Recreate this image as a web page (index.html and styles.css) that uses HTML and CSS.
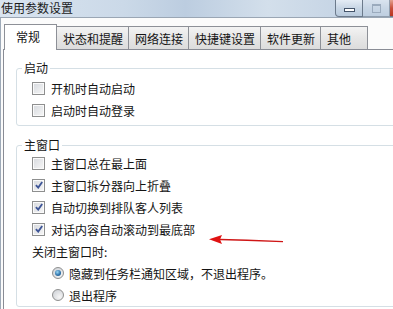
FILE: index.html
```html
<!DOCTYPE html>
<html lang="zh-CN">
<head>
    <meta charset="UTF-8">
    <meta name="viewport" content="width=device-width, initial-scale=1.0">
    <title>使用参数设置</title>
    <link rel="stylesheet" href="styles.css">
</head>
<body>
    <div class="window">
        <div class="titlebar">
            <span class="title">使用参数设置</span>
            <div class="controls">
                <span class="btn min"><i></i></span>
                <span class="btn max"><i></i></span>
                <span class="btn close"></span>
            </div>
        </div>
        <div class="client">
            <div class="tabs">
                <span class="tab active">常规</span>
                <span class="tab">状态和提醒</span>
                <span class="tab">网络连接</span>
                <span class="tab">快捷键设置</span>
                <span class="tab">软件更新</span>
                <span class="tab last">其他</span>
            </div>
            <div class="panel">
                <fieldset class="group">
                    <legend>启动</legend>
                    <label class="option"><span class="check"></span>开机时自动启动</label>
                    <label class="option"><span class="check"></span>启动时自动登录</label>
                </fieldset>
                <fieldset class="group second">
                    <legend>主窗口</legend>
                    <label class="option"><span class="check"></span>主窗口总在最上面</label>
                    <label class="option"><span class="check on"><svg viewBox="0 0 7 7"><path d="M0.8 3.6 L2.8 5.8 L6.3 0.8"/></svg></span>主窗口拆分器向上折叠</label>
                    <label class="option"><span class="check on"><svg viewBox="0 0 7 7"><path d="M0.8 3.6 L2.8 5.8 L6.3 0.8"/></svg></span>自动切换到排队客人列表</label>
                    <label class="option"><span class="check on"><svg viewBox="0 0 7 7"><path d="M0.8 3.6 L2.8 5.8 L6.3 0.8"/></svg></span>对话内容自动滚动到最底部</label>
                    <div class="option note">关闭主窗口时:</div>
                    <label class="option sub"><span class="radio on"></span>隐藏到任务栏通知区域，不退出程序。</label>
                    <label class="option sub"><span class="radio"></span>退出程序</label>
                </fieldset>
            </div>
        </div>
        <svg class="arrow" viewBox="0 0 85 16">
            <path class="shaft" d="M15 7.5 L42 8.2 L78 9.6"/>
            <path class="head" d="M4 7.2 L17 3 L15 7.5 L17 12 Z"/>
        </svg>
    </div>
</body>
</html>
```

FILE: styles.css
```css
body {
    margin: 0;
    width: 393px;
    height: 309px;
    overflow: hidden;
    font-family: "Noto Sans CJK SC", "Noto Sans", sans-serif;
    font-size: 12px;
    color: #141414;
    background: #fbfbfb;
}
.window {
    position: relative;
    width: 440px;
}
.titlebar {
    display: flex;
    align-items: flex-start;
    width: 412px;
    height: 17px;
    background: linear-gradient(to right, #d9e4f0 0%, #cbd9e8 30%, #bccde0 45%, #d3dfeb 65%, #c4d3e4 85%, #cfdbe8 100%);
    border-bottom: 1px solid #9aa6b4;
}
.title {
    padding-left: 1px;
    line-height: 16px;
    color: #1b1b1b;
}
.controls {
    display: flex;
    margin-left: auto;
}
.btn {
    box-sizing: border-box;
    display: flex;
    align-items: center;
    justify-content: center;
    height: 17px;
    border: 1px solid #6c7a8b;
    border-top: none;
    background: linear-gradient(#e4ecf5, #c8d6e5 50%, #b9cadd);
}
.min {
    width: 28px;
    border-radius: 0 0 0 4px;
}
.min i {
    display: block;
    width: 9px;
    height: 2px;
    margin-top: 3px;
    background: #fff;
    border: 1px solid #44546a;
}
.max {
    width: 27px;
    border-left: none;
    opacity: 0.6;
}
.max i {
    display: block;
    width: 7px;
    height: 6px;
    border: 1px solid #7d8ea3;
    border-top-width: 2px;
}
.close {
    width: 22px;
    border-left: none;
    background: linear-gradient(#e3a08e, #c9503c 50%, #b8351f);
}
.client {
    border-left: 1px solid #9eaab8;
    padding-left: 2px;
}
.tabs {
    display: flex;
    align-items: flex-end;
    height: 25px;
    padding: 6px 0 0 1px;
    position: relative;
    z-index: 1;
}
.tab {
    box-sizing: border-box;
    height: 23px;
    padding: 1px 5px 0 6px;
    line-height: 21px;
    border: 1px solid #8d9097;
    border-bottom: none;
    border-left: none;
    background: linear-gradient(#f3f3f3, #e6e6e6 50%, #dcdcdc);
    white-space: nowrap;
}
.tab.active {
    width: 53px;
    height: 26px;
    margin-bottom: -1px;
    padding: 0 0 0 11px;
    line-height: 24px;
    border-left: 1px solid #8d9097;
    background: #fff;
}
.tab.last {
    width: 47px;
    padding-left: 6px;
}
.panel {
    width: 430px;
    height: 260px;
    padding-left: 12px;
    border: 1px solid #898c95;
    background: #fff;
}
.group {
    width: 400px;
    margin: 11px 0 0;
    padding: 2px 0 4px 5px;
    border: 1px solid #d5dfe5;
    border-radius: 3px;
}
.group.second {
    margin-top: 12px;
    padding-top: 0;
    padding-bottom: 0;
}
legend {
    padding: 0 2px;
    line-height: 14px;
}
.option {
    display: flex;
    align-items: center;
    height: 22px;
    margin-left: 10px;
    white-space: nowrap;
}
.option.sub {
    margin-left: 30px;
}
.check {
    box-sizing: border-box;
    display: flex;
    align-items: center;
    justify-content: center;
    width: 13px;
    height: 13px;
    margin-right: 6px;
    border: 1px solid #8e8f8f;
    background: linear-gradient(135deg, #d6d9de, #f7f7f7);
    box-shadow: inset 0 0 0 1px #fafafa;
}
.check svg {
    width: 8px;
    height: 8px;
    fill: none;
    stroke: #3f5697;
    stroke-width: 1.6;
}
.radio {
    box-sizing: border-box;
    display: flex;
    align-items: center;
    justify-content: center;
    width: 12px;
    height: 12px;
    margin-right: 5px;
    border: 1px solid #8e8f8f;
    border-radius: 50%;
    background: radial-gradient(circle at 65% 70%, #f6f6f6, #d2d5da 80%);
}
.radio.on::after {
    content: "";
    width: 6px;
    height: 6px;
    border-radius: 50%;
    background: radial-gradient(circle at 40% 35%, #9bd8f5, #2f74ac 55%, #1c4c7c);
}
.arrow {
    position: absolute;
    left: 205px;
    top: 232px;
    width: 85px;
    height: 16px;
}
.arrow .shaft {
    fill: none;
    stroke: #cf1616;
    stroke-width: 1.4;
}
.arrow .head {
    fill: #e01212;
}
```
